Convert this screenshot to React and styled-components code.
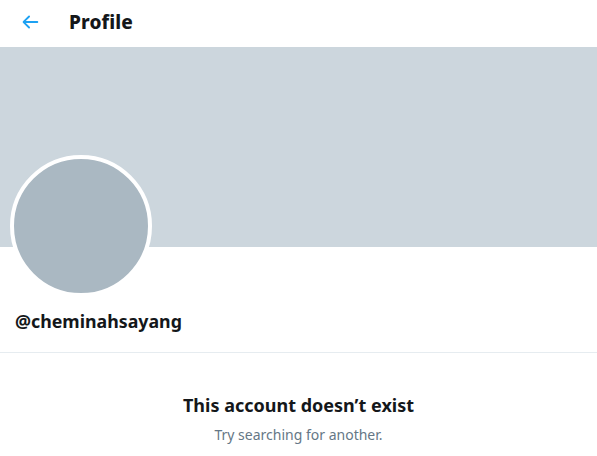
import styled, { createGlobalStyle } from "styled-components";

const GlobalStyle = createGlobalStyle`
    body {
        margin: 0;
        background: #FFFFFF;
        font-family: "Noto Sans", "Open Sans", sans-serif;
        color: #14171A;
    }
`;

function BackArrow() {
    return (
        <svg width="22" height="22" viewBox="0 0 24 24">
            <path
                fill="#1DA1F2"
                d="M20 11H7.414l4.293-4.293a1 1 0 0 0-1.414-1.414l-6 6a1 1 0 0 0 0 1.414l6 6a1 1 0 0 0 1.414-1.414L7.414 13H20a1 1 0 1 0 0-2z"
            />
        </svg>
    );
}

export default function App() {
    return (
        <>
            <GlobalStyle />
            <Page>
                <Header>
                    <BackButton><BackArrow /></BackButton>
                    <Title>Profile</Title>
                </Header>
                <Banner />
                <AvatarRow>
                    <Avatar />
                </AvatarRow>
                <Handle>@cheminahsayang</Handle>
                <Empty>
                    <h2>This account doesn’t exist</h2>
                    <p>Try searching for another.</p>
                </Empty>
            </Page>
        </>
    );
}

const Page = styled.div`
    width: 597px;
    min-height: 456px;
    display: flex;
    flex-direction: column;
`;

const Header = styled.div`
    height: 47px;
    display: flex;
    align-items: center;
    padding-left: 19px;
    gap: 28px;
    box-sizing: border-box;
`;

const BackButton = styled.div`
    display: flex;
    align-items: center;
    margin-top: -4px;
`;

const Title = styled.h1`
    margin: 0;
    font-size: 19px;
    font-weight: 800;
    letter-spacing: 0.1px;
    margin-top: -3px;
`;

const Banner = styled.div`
    height: 200px;
    background-color: #CCD6DD;
`;

const AvatarRow = styled.div`
    display: flex;
    padding-left: 10px;
    margin-top: -92px;
`;

const Avatar = styled.div`
    width: 134px;
    height: 134px;
    border-radius: 50%;
    border: 4px solid #FFFFFF;
    background-color: #AAB8C2;
`;

const Handle = styled.div`
    padding: 12px 15px 19px;
    font-size: 17.8px;
    font-weight: 700;
    border-bottom: 1px solid #E6ECF0;
`;

const Empty = styled.div`
    display: flex;
    flex-direction: column;
    align-items: center;
    padding-top: 40px;

    h2 {
        margin: 0;
        font-size: 18px;
        font-weight: 700;
    }

    p {
        margin: 8px 0 0;
        font-size: 14px;
        color: #657786;
    }
`;
